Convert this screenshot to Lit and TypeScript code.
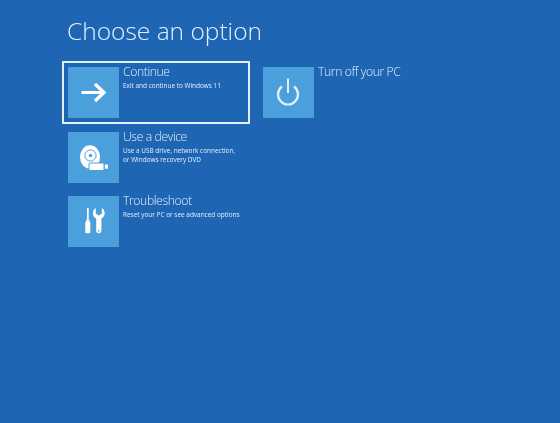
import { LitElement, html, css, svg } from 'lit';
import { customElement } from 'lit/decorators.js';

const arrow = svg`<path d="M13.500 25.500h23M27 17 36 25.500 27 34" fill="none" stroke="#fff" stroke-width="3.200"/>`;

const device = svg`
  <ellipse cx="22" cy="25" rx="10" ry="11.800" fill="#fff"/>
  <circle cx="22.500" cy="23.500" r="5.600" fill="none" stroke="#4ba0db" stroke-width="1"/>
  <circle cx="22.500" cy="23.500" r="1.700" fill="#4ba0db"/>
  <rect x="21" y="31" width="15" height="7.500" rx="1" fill="#fff" stroke="#4ba0db" stroke-width="1"/>
  <rect x="36.800" y="32.500" width="3.200" height="4.200" fill="#fff"/>`;

const tools = svg`
  <path d="M19 12h1.700v11.500h-1.700z" fill="#fff"/>
  <path d="M18.200 23.500h3.300v2.500h.8v10.300a1 1 0 0 1-1 1h-3a1 1 0 0 1-1-1v-10.300h.9z" fill="#fff"/>
  <path d="M27.800 12v5.800l3 1.700 3-1.700v-5.800c1.800.9 2.900 3 2.900 5.300 0 2.600-1.500 4.500-3.300 5.300v12a2.600 2.600 0 0 1-5.200 0v-12c-1.800-.8-3.300-2.700-3.300-5.300 0-2.300 1.100-4.400 2.900-5.300z" fill="#fff"/>
  <circle cx="30.800" cy="34.800" r=".9" fill="#4ba0db"/>`;

const power = svg`
  <path d="M25 11.500v14.500" fill="none" stroke="#e3f0fa" stroke-width="2"/>
  <path d="M19 19.500a10 10 0 1 0 12 0" fill="none" stroke="#e3f0fa" stroke-width="2.200"/>`;

@customElement('app-root')
export class AppRoot extends LitElement {
  static styles = css`
    :host {
      display: block;
      height: 423px;
      background: #1e65b4;
      color: #fff;
      font-family: 'Open Sans', 'Liberation Sans', sans-serif;
      overflow: hidden;
    }
    .page {
      padding: 12px 0 0 62px;
      filter: blur(0.35px);
    }
    h1 {
      margin: 0 0 12px 5px;
      font-size: 24.500px;
      line-height: 37px;
      font-weight: 300;
      color: #e4f1fb;
    }
    .columns {
      display: flex;
      gap: 7px;
    }
    .column {
      display: flex;
      flex-direction: column;
      gap: 1.500px;
      width: 188px;
    }
    .option {
      display: flex;
      gap: 4px;
      height: 63px;
      box-sizing: border-box;
      padding: 4px;
      border: 2px solid transparent;
    }
    .option.focused {
      border-color: #e3f0fa;
    }
    .tile {
      flex: none;
      width: 51px;
      height: 51px;
      background: #4ba0db;
    }
    .tile svg {
      display: block;
    }
    .name {
      margin-top: -3px;
      font-size: 12.200px;
      letter-spacing: -0.4px;
      line-height: 16px;
      font-weight: 300;
      color: #e4f1fb;
    }
    .desc {
      margin-top: 1px;
      font-size: 6.450px;
      line-height: 9.500px;
      color: #e4f1fb;
    }
  `;

  renderOption(name: string, desc: unknown, icon: unknown, focused = false) {
    return html`
      <div class="option ${focused ? 'focused' : ''}">
        <div class="tile"><svg width="51" height="51" viewBox="0 0 51 51">${icon}</svg></div>
        <div>
          <div class="name">${name}</div>
          ${desc ? html`<div class="desc">${desc}</div>` : ''}
        </div>
      </div>
    `;
  }

  render() {
    return html`
      <div class="page">
        <h1>Choose an option</h1>
        <div class="columns">
          <div class="column">
            ${this.renderOption('Continue', 'Exit and continue to Windows 11', arrow, true)}
            ${this.renderOption('Use a device', html`Use a USB drive, network connection,<br />or Windows recovery DVD`, device)}
            ${this.renderOption('Troubleshoot', 'Reset your PC or see advanced options', tools)}
          </div>
          <div class="column">
            ${this.renderOption('Turn off your PC', '', power)}
          </div>
        </div>
      </div>
    `;
  }
}
